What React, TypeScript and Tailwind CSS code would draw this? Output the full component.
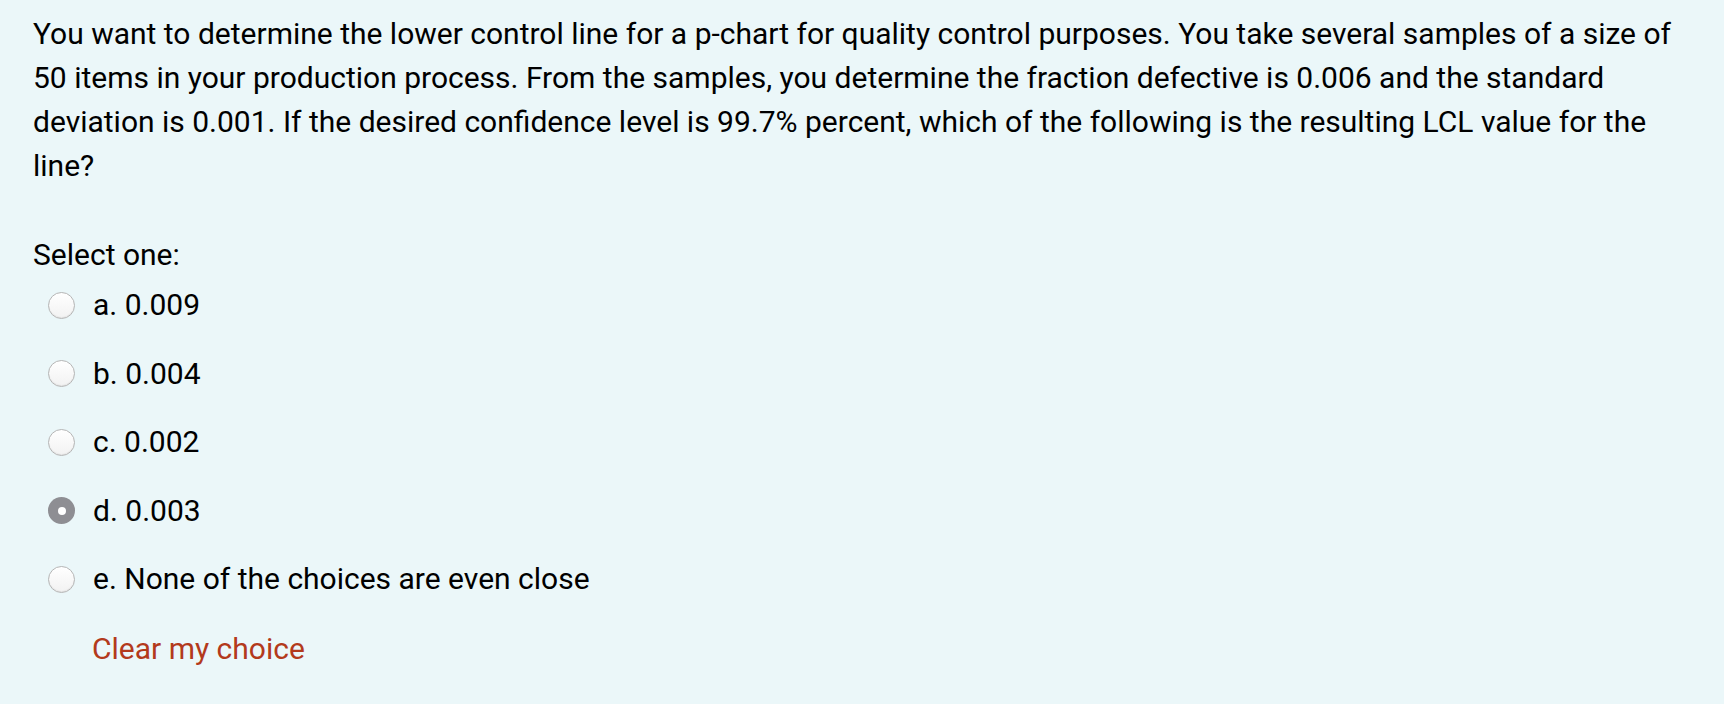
const options = [
  { key: "a", label: "0.009", checked: false },
  { key: "b", label: "0.004", checked: false },
  { key: "c", label: "0.002", checked: false },
  { key: "d", label: "0.003", checked: true },
  { key: "e", label: "None of the choices are even close", checked: false },
];

function Radio({ checked }: { checked: boolean }) {
  if (checked) {
    return (
      <span className="flex h-[27px] w-[27px] shrink-0 items-center justify-center rounded-full bg-[#8e8e93]">
        <span className="h-[8px] w-[8px] rounded-full bg-white" />
      </span>
    );
  }
  return (
    <span className="h-[27px] w-[27px] shrink-0 rounded-full border border-[#b5b5b5] bg-gradient-to-b from-white to-[#f2f2f2] shadow-[inset_0_-1px_1px_rgba(0,0,0,0.06)]" />
  );
}

export default function App() {
  return (
    <div className="min-h-screen bg-white font-['Roboto',sans-serif] text-black">
      <div className="h-[704px] w-[1724px] bg-[#ebf7f9] pl-[33px] pr-[33px] pt-[12px]">
        <p className="text-[30px] leading-[44px]">
          You want to determine the lower control line for a p-chart for quality control purposes. You take several
          samples of a size of 50 items in your production process. From the samples, you determine the fraction
          defective is 0.006 and the standard deviation is 0.001. If the desired confidence level is 99.7% percent,
          which of the following is the resulting LCL value for the line?
        </p>

        <div className="mt-[45px] text-[30px] leading-[44px]">Select one:</div>

        <div className="mt-[6px] flex flex-col gap-[24.5px]">
          {options.map((o) => (
            <label key={o.key} className="flex items-center pl-[15px] text-[30px] leading-[44px]">
              <Radio checked={o.checked} />
              <span className="ml-[18px]">
                {o.key}. {o.label}
              </span>
            </label>
          ))}
        </div>

        <div className="mt-[26px] pl-[59px] text-[30px] leading-[44px] text-[#b33a1c]">Clear my choice</div>
      </div>
    </div>
  );
}
